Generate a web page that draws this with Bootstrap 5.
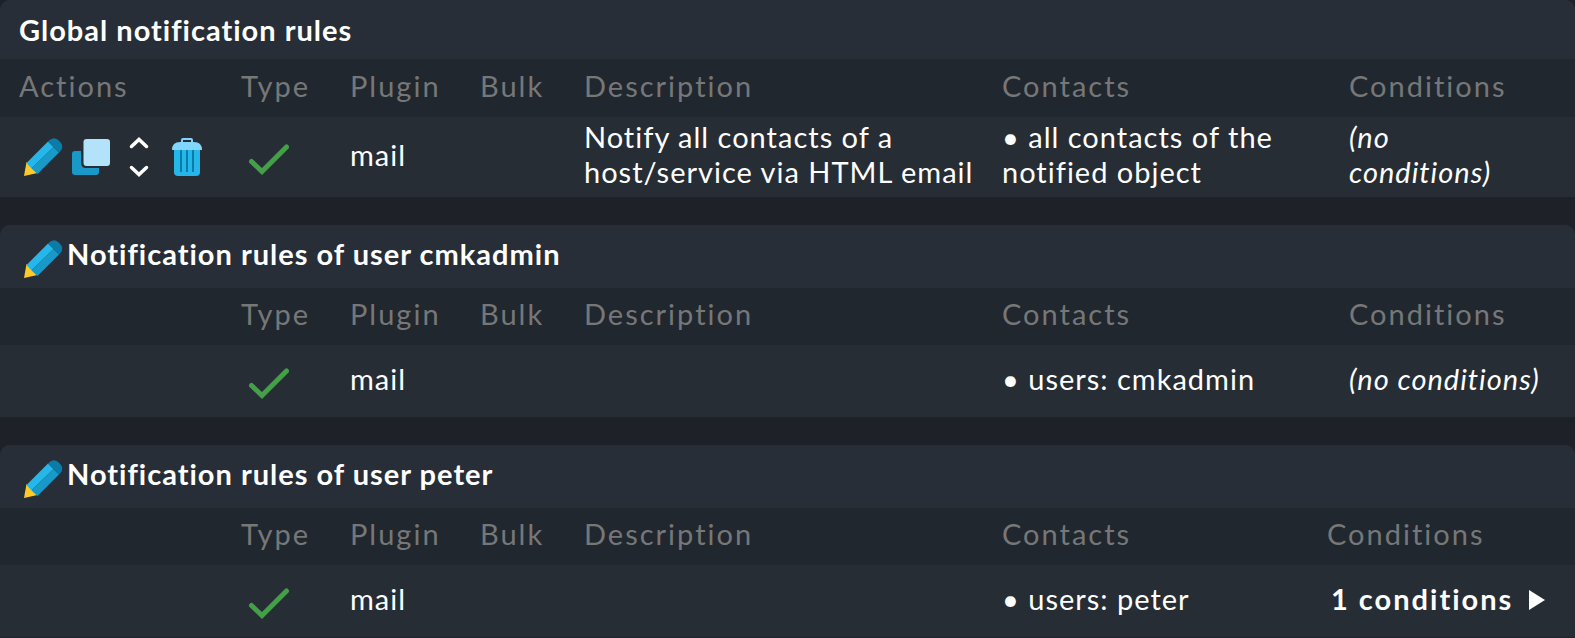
<!DOCTYPE html>
<html lang="en">
<head>
<meta charset="utf-8">
<meta name="viewport" content="width=device-width, initial-scale=1">
<title>Notification rules</title>
<link href="https://cdn.jsdelivr.net/npm/bootstrap@5.3.0/dist/css/bootstrap.min.css" rel="stylesheet">
<style>
body { background: #1e2128; color: #fff; font-family: Lato, sans-serif; font-size: 29px; line-height: 35px; letter-spacing: 1px; }
.rules { border-radius: 10px 10px 0 0; background: #262d34; }
.rules + .rules { margin-top: 28px; }
.rules-title { height: 63px; padding: 0 19px 6px; background: #272e37; border-radius: 10px 10px 0 0; font-size: 29px; line-height: 35px; font-weight: 700; }
.rules-title.plain { height: 59px; padding-bottom: 0; }
.rules-title .icon-btn { margin-top: 10px; }
.rules-table { table-layout: fixed; color: #fff; }
.rules-table th { height: 57px; padding: 0 0 6px 10px; background: #21272e; color: #767778; font-weight: 400; letter-spacing: 2px; vertical-align: middle; }
.rules-table td { height: 72px; padding: 0 10px 6px; vertical-align: middle; }
.rules-table tr > :first-child { padding-left: 19px; }
.rules-table td.icon-cell { padding: 0 0 0 14px; }
.rules-table td.actions-cell { padding: 0 0 0 19px; }
.global th { height: 58px; }
.global td { height: 80px; }
.global td:last-child { padding-right: 40px; }
.c-actions { width: 231px; }
.c-type { width: 109px; }
.c-plugin { width: 130px; }
.c-bulk { width: 104px; }
.c-contacts { width: 347px; }
.c-conditions { width: 236px; }
.narrow .c-contacts { width: 325px; }
.narrow .c-conditions { width: 258px; }
.icon-btn { width: 48px; height: 48px; }
.icon-btn svg, .icon-cell svg { display: block; width: 48px; height: 48px; }
.fold { font-weight: 700; letter-spacing: 2px; }
.fold svg { width: 16px; height: 20px; margin-top: 4px; }
</style>
</head>
<body>
<svg class="d-none" aria-hidden="true">
  <symbol id="pencil" viewBox="0 0 48 48">
    <path fill="#ffca28" d="M5 43 7.500 29 18.500 40z"/>
    <path fill="#26b7ea" d="M7.500 30 29 8.500 34.500 14 12.500 35.500z"/>
    <path fill="#1899c7" d="M12.500 35.500 34.500 14 40 19.500 18.500 41z"/>
    <path fill="#0b7ca7" d="M29 8.500 31 6.700Q36 3 40.500 8.200 45.500 13 41.500 18L40 19.500z"/>
  </symbol>
  <symbol id="copy" viewBox="0 0 48 48">
    <path fill="#1899c7" d="M8 18H14V30Q14 35 19 35H32V39Q32 42 29 42H8Q5 42 5 39V21Q5 18 8 18z"/>
    <rect x="16.500" y="6" width="26.500" height="27" rx="3" fill="#b3e3fb"/>
  </symbol>
  <symbol id="move" viewBox="0 0 48 48">
    <path fill="none" stroke="#fff" stroke-width="3.500" stroke-linecap="round" d="M16.500 13.500 24 6.500 31.500 13.500M16.500 34.500 24 41.500 31.500 34.500"/>
  </symbol>
  <symbol id="trash" viewBox="0 0 48 48">
    <path fill="none" stroke="#81d4fa" stroke-width="2" d="M19 10V7Q19 6 20 6H28Q29 6 29 7V10"/>
    <path fill="#26b7ea" d="M11 16H37V39Q37 43 33 43H15Q11 43 11 39z"/>
    <path stroke="#0b7ca7" stroke-width="2" d="M18 17V39M24 17V39M30 17V39"/>
    <path fill="#81d4fa" d="M9 17Q9 9 17 9H31Q39 9 39 17z"/>
  </symbol>
  <symbol id="check" viewBox="0 0 48 48">
    <path fill="none" stroke="#43a047" stroke-width="5" stroke-linecap="round" d="M6.500 28.500 17 38.500 41.500 14"/>
  </symbol>
</svg>

<main>
  <section class="rules">
    <h2 class="rules-title plain d-flex align-items-center m-0">Global notification rules</h2>
    <table class="rules-table global w-100">
      <colgroup><col class="c-actions"><col class="c-type"><col class="c-plugin"><col class="c-bulk"><col><col class="c-contacts"><col class="c-conditions"></colgroup>
      <thead><tr><th scope="col">Actions</th><th scope="col">Type</th><th scope="col">Plugin</th><th scope="col">Bulk</th><th scope="col">Description</th><th scope="col">Contacts</th><th scope="col">Conditions</th></tr></thead>
      <tbody><tr>
        <td class="actions-cell"><div class="d-flex">
          <button type="button" class="icon-btn btn p-0 border-0" aria-label="Edit rule"><svg><use href="#pencil"/></svg></button>
          <button type="button" class="icon-btn btn p-0 border-0" aria-label="Clone rule"><svg><use href="#copy"/></svg></button>
          <button type="button" class="icon-btn btn p-0 border-0" aria-label="Move rule"><svg><use href="#move"/></svg></button>
          <button type="button" class="icon-btn btn p-0 border-0" aria-label="Delete rule"><svg><use href="#trash"/></svg></button>
        </div></td>
        <td class="icon-cell"><svg role="img" aria-label="Active"><use href="#check"/></svg></td>
        <td>mail</td><td></td>
        <td>Notify all contacts of a host/service via HTML email</td>
        <td>• all contacts of the notified object</td>
        <td><i>(no conditions)</i></td>
      </tr></tbody>
    </table>
  </section>

  <section class="rules">
    <h2 class="rules-title d-flex align-items-center m-0"><button type="button" class="icon-btn btn p-0 border-0" aria-label="Edit rules of cmkadmin"><svg><use href="#pencil"/></svg></button>Notification rules of user cmkadmin</h2>
    <table class="rules-table w-100">
      <colgroup><col class="c-actions"><col class="c-type"><col class="c-plugin"><col class="c-bulk"><col><col class="c-contacts"><col class="c-conditions"></colgroup>
      <thead><tr><th></th><th scope="col">Type</th><th scope="col">Plugin</th><th scope="col">Bulk</th><th scope="col">Description</th><th scope="col">Contacts</th><th scope="col">Conditions</th></tr></thead>
      <tbody><tr>
        <td></td>
        <td class="icon-cell"><svg role="img" aria-label="Active"><use href="#check"/></svg></td>
        <td>mail</td><td></td><td></td>
        <td>• users: cmkadmin</td>
        <td><i>(no conditions)</i></td>
      </tr></tbody>
    </table>
  </section>

  <section class="rules">
    <h2 class="rules-title d-flex align-items-center m-0"><button type="button" class="icon-btn btn p-0 border-0" aria-label="Edit rules of peter"><svg><use href="#pencil"/></svg></button>Notification rules of user peter</h2>
    <table class="rules-table narrow w-100">
      <colgroup><col class="c-actions"><col class="c-type"><col class="c-plugin"><col class="c-bulk"><col><col class="c-contacts"><col class="c-conditions"></colgroup>
      <thead><tr><th></th><th scope="col">Type</th><th scope="col">Plugin</th><th scope="col">Bulk</th><th scope="col">Description</th><th scope="col">Contacts</th><th scope="col">Conditions</th></tr></thead>
      <tbody><tr>
        <td></td>
        <td class="icon-cell"><svg role="img" aria-label="Active"><use href="#check"/></svg></td>
        <td>mail</td><td></td><td></td>
        <td>• users: peter</td>
        <td><button type="button" class="fold d-flex align-items-center gap-3 border-0 bg-transparent text-white text-nowrap p-0 ps-1" aria-expanded="false">1 conditions<svg viewBox="0 0 16 20" aria-hidden="true"><path fill="#fff" d="M0 0 16 10 0 20z"/></svg></button></td>
      </tr></tbody>
    </table>
  </section>
</main>
<script src="https://cdn.jsdelivr.net/npm/bootstrap@5.3.0/dist/js/bootstrap.bundle.min.js"></script>
</body>
</html>
